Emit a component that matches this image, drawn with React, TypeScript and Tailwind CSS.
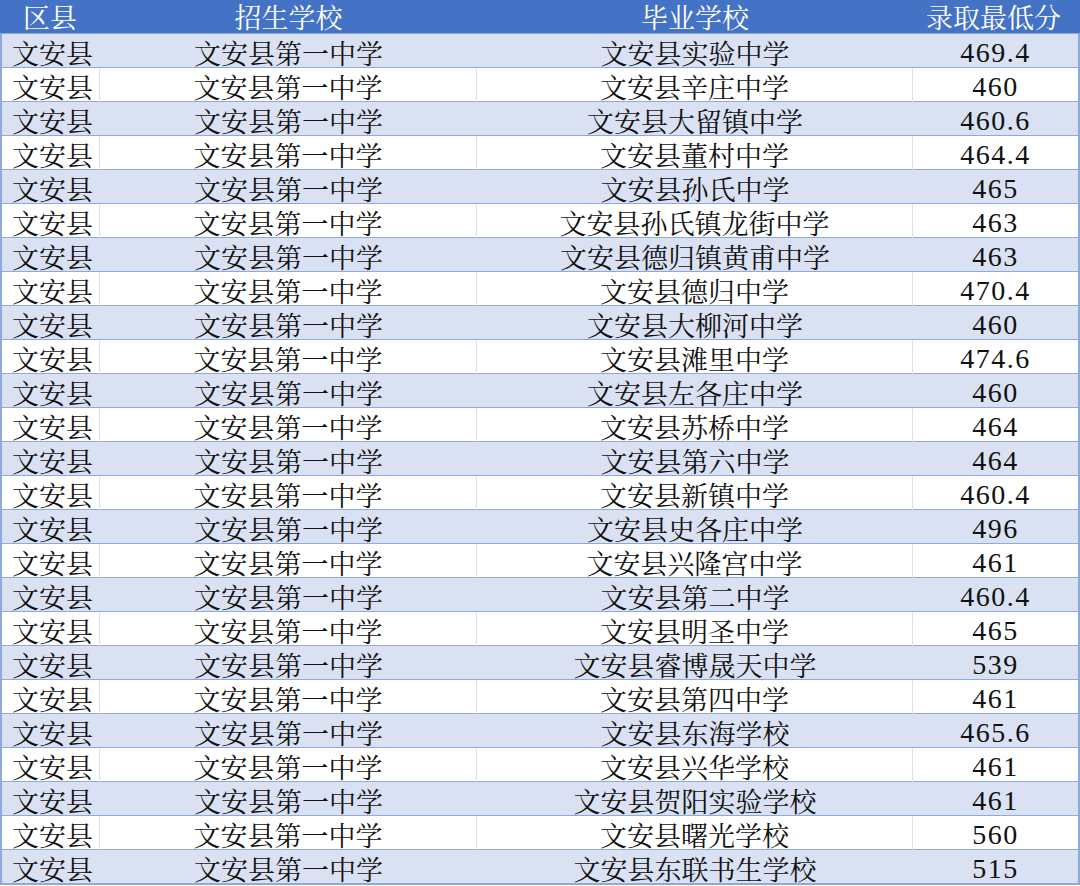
const rows: [string, string][] = [
  ["文安县实验中学", "469.4"],
  ["文安县辛庄中学", "460"],
  ["文安县大留镇中学", "460.6"],
  ["文安县董村中学", "464.4"],
  ["文安县孙氏中学", "465"],
  ["文安县孙氏镇龙街中学", "463"],
  ["文安县德归镇黄甫中学", "463"],
  ["文安县德归中学", "470.4"],
  ["文安县大柳河中学", "460"],
  ["文安县滩里中学", "474.6"],
  ["文安县左各庄中学", "460"],
  ["文安县苏桥中学", "464"],
  ["文安县第六中学", "464"],
  ["文安县新镇中学", "460.4"],
  ["文安县史各庄中学", "496"],
  ["文安县兴隆宫中学", "461"],
  ["文安县第二中学", "460.4"],
  ["文安县明圣中学", "465"],
  ["文安县睿博晟天中学", "539"],
  ["文安县第四中学", "461"],
  ["文安县东海学校", "465.6"],
  ["文安县兴华学校", "461"],
  ["文安县贺阳实验学校", "461"],
  ["文安县曙光学校", "560"],
  ["文安县东联书生学校", "515"],
];

const cjk = "font-['Noto_Serif_CJK_SC','Noto_Sans_CJK_SC',serif]";
const num = "font-['Liberation_Serif','Noto_Sans_CJK_SC',serif] tracking-[1.5px] text-[28px]";

export default function App() {
  return (
    <div className={`w-[1080px] h-[886px] overflow-hidden bg-white text-[27px] leading-[30px] ${cjk}`}>
      <div className="grid grid-cols-[100px_377px_436px_1fr] h-[34px] bg-[#4472c4] text-white border-b border-[#8ea9db]">
        <div className="flex items-center justify-center">区县</div>
        <div className="flex items-center justify-center">招生学校</div>
        <div className="flex items-center justify-center">毕业学校</div>
        <div className="flex items-center justify-center pr-[6px]">录取最低分</div>
      </div>
      <div className="border-x-2 border-b-2 border-[#8ea9db] -mt-px">
        {rows.map(([school, score], i) => {
          const alt = i % 2 === 0;
          const grid = alt ? "" : "border-r border-[#e0e0e0]";
          return (
            <div
              key={i}
              className={`grid grid-cols-[98px_377px_436px_1fr] h-[34px] text-[#111] border-t border-[#8ea9db] ${alt ? "bg-[#d9e1f2]" : "bg-white"}`}
            >
              <div className={`flex items-center pl-[10px] pt-[4px] ${grid}`}>文安县</div>
              <div className={`flex items-center justify-center pt-[4px] ${grid}`}>文安县第一中学</div>
              <div className={`flex items-center justify-center pt-[4px] ${grid}`}>{school}</div>
              <div className={`flex items-center justify-center pt-[4px] ${num}`}>{score}</div>
            </div>
          );
        })}
      </div>
    </div>
  );
}
